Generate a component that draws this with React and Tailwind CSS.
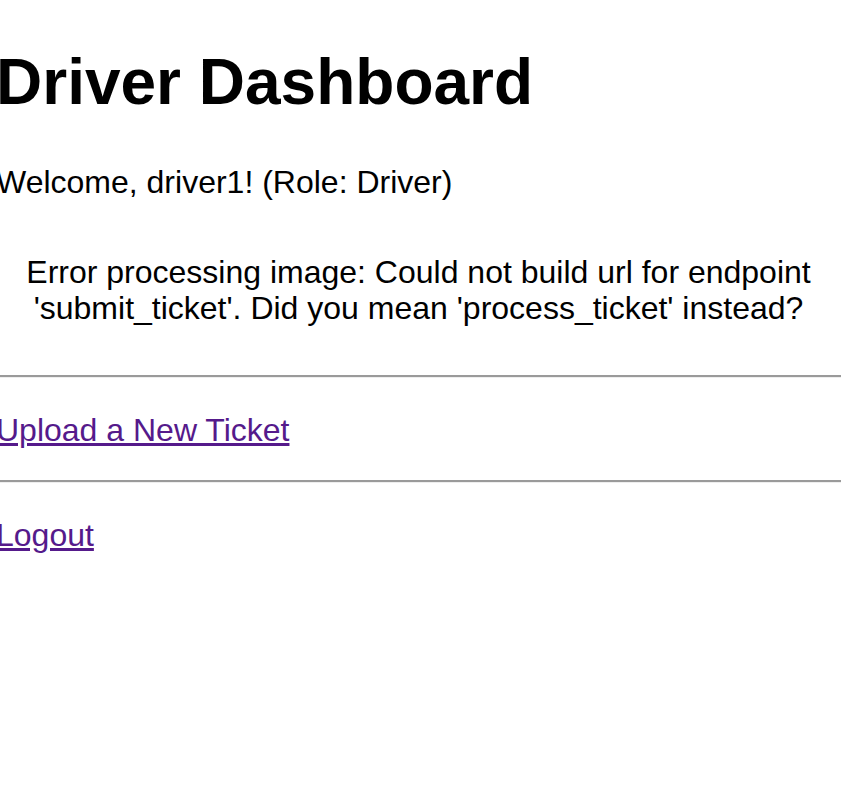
import React from "react";

const App = () => {
  return (
    <div className="min-h-screen bg-white text-black font-['Liberation_Sans',Arial,sans-serif]">
      {/* page body, slightly cropped on the left like the screenshot */}
      <div className="-ml-[4px] w-[845px] pt-[45px]">
        <h1 className="text-[64px] font-bold leading-[74px]">Driver Dashboard</h1>

        <p className="mt-[45px] text-[32px] leading-[37px]">
          Welcome, driver1! (Role: Driver)
        </p>

        {/* flash message */}
        <p className="mt-[53px] text-center text-[32px] leading-[36px]">
          Error processing image: Could not build url for endpoint
          'submit_ticket'. Did you mean 'process_ticket' instead?
        </p>

        <hr className="mt-[49px] border-0 border-t-2 border-b border-t-[#9a9a9a] border-b-[#eeeeee]" />

        <div className="mt-[34px] text-[32px] leading-[36px]">
          <a href="#upload" className="text-[#551a8b] underline">
            Upload a New Ticket
          </a>
        </div>

        <hr className="mt-[32px] border-0 border-t-2 border-b border-t-[#9a9a9a] border-b-[#eeeeee]" />

        <div className="mt-[34px] text-[32px] leading-[36px]">
          <a href="#logout" className="text-[#551a8b] underline">
            Logout
          </a>
        </div>
      </div>
    </div>
  );
};

export default App;
